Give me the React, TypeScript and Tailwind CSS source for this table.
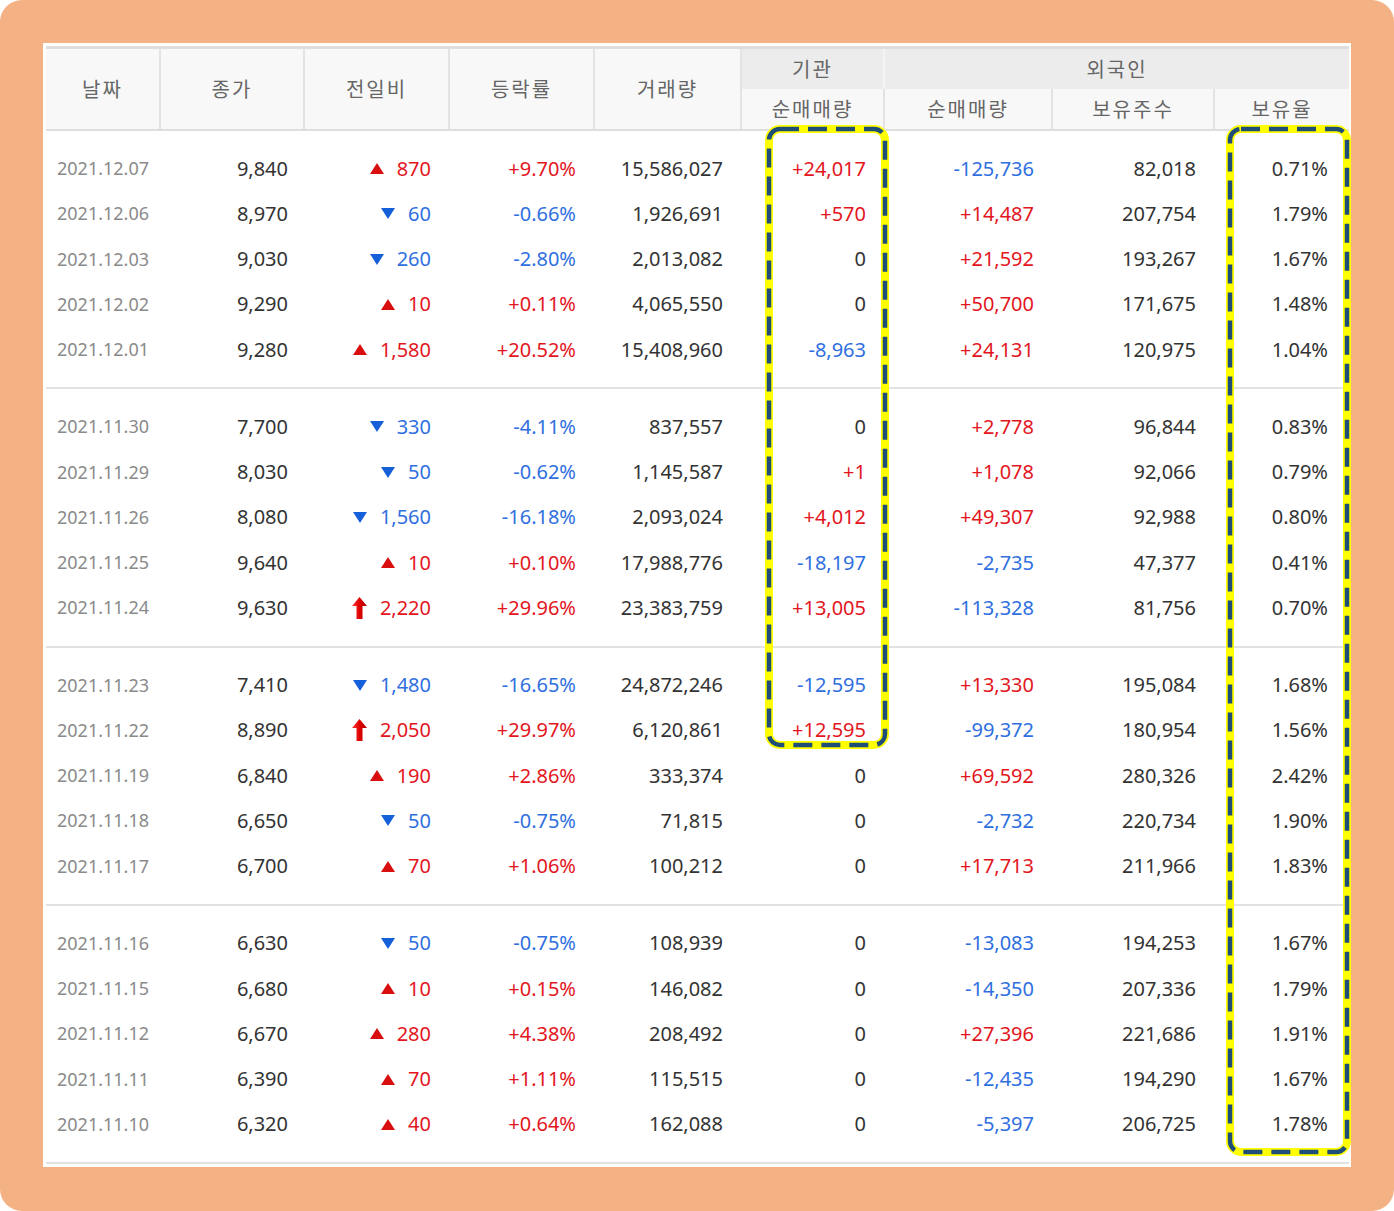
import React from 'react'

// ── data ──────────────────────────────────────────────────────────────────────

type Dir = 'up' | 'down' | 'limit'

interface Row {
  date: string
  close: string
  dir: Dir
  diff: string
  rate: string
  volume: string
  inst: string
  foreign: string
  shares: string
  ratio: string
}

const r = (
  date: string,
  close: string,
  dir: Dir,
  diff: string,
  rate: string,
  volume: string,
  inst: string,
  foreign: string,
  shares: string,
  ratio: string,
): Row => ({ date, close, dir, diff, rate, volume, inst, foreign, shares, ratio })

const groups: Row[][] = [
  [
    r('2021.12.07', '9,840', 'up', '870', '+9.70%', '15,586,027', '+24,017', '-125,736', '82,018', '0.71%'),
    r('2021.12.06', '8,970', 'down', '60', '-0.66%', '1,926,691', '+570', '+14,487', '207,754', '1.79%'),
    r('2021.12.03', '9,030', 'down', '260', '-2.80%', '2,013,082', '0', '+21,592', '193,267', '1.67%'),
    r('2021.12.02', '9,290', 'up', '10', '+0.11%', '4,065,550', '0', '+50,700', '171,675', '1.48%'),
    r('2021.12.01', '9,280', 'up', '1,580', '+20.52%', '15,408,960', '-8,963', '+24,131', '120,975', '1.04%'),
  ],
  [
    r('2021.11.30', '7,700', 'down', '330', '-4.11%', '837,557', '0', '+2,778', '96,844', '0.83%'),
    r('2021.11.29', '8,030', 'down', '50', '-0.62%', '1,145,587', '+1', '+1,078', '92,066', '0.79%'),
    r('2021.11.26', '8,080', 'down', '1,560', '-16.18%', '2,093,024', '+4,012', '+49,307', '92,988', '0.80%'),
    r('2021.11.25', '9,640', 'up', '10', '+0.10%', '17,988,776', '-18,197', '-2,735', '47,377', '0.41%'),
    r('2021.11.24', '9,630', 'limit', '2,220', '+29.96%', '23,383,759', '+13,005', '-113,328', '81,756', '0.70%'),
  ],
  [
    r('2021.11.23', '7,410', 'down', '1,480', '-16.65%', '24,872,246', '-12,595', '+13,330', '195,084', '1.68%'),
    r('2021.11.22', '8,890', 'limit', '2,050', '+29.97%', '6,120,861', '+12,595', '-99,372', '180,954', '1.56%'),
    r('2021.11.19', '6,840', 'up', '190', '+2.86%', '333,374', '0', '+69,592', '280,326', '2.42%'),
    r('2021.11.18', '6,650', 'down', '50', '-0.75%', '71,815', '0', '-2,732', '220,734', '1.90%'),
    r('2021.11.17', '6,700', 'up', '70', '+1.06%', '100,212', '0', '+17,713', '211,966', '1.83%'),
  ],
  [
    r('2021.11.16', '6,630', 'down', '50', '-0.75%', '108,939', '0', '-13,083', '194,253', '1.67%'),
    r('2021.11.15', '6,680', 'up', '10', '+0.15%', '146,082', '0', '-14,350', '207,336', '1.79%'),
    r('2021.11.12', '6,670', 'up', '280', '+4.38%', '208,492', '0', '+27,396', '221,686', '1.91%'),
    r('2021.11.11', '6,390', 'up', '70', '+1.11%', '115,515', '0', '-12,435', '194,290', '1.67%'),
    r('2021.11.10', '6,320', 'up', '40', '+0.64%', '162,088', '0', '-5,397', '206,725', '1.78%'),
  ],
]

const COLS = 'grid grid-cols-[115px_144px_145px_145px_147px_143px_168px_162px_134px]'
const FONT = { fontFamily: '"Noto Sans", "Noto Sans CJK KR", sans-serif' }
const HFONT = { fontFamily: '"Noto Sans CJK KR", "Noto Sans", sans-serif' }

// + red, - blue, 0 dark
const signColor = (v: string) => {
  if (v.startsWith('+')) return 'text-[#e3161e]'
  if (v.startsWith('-')) return 'text-[#2f6fe0]'
  return 'text-[#333333]'
}

// ── icons ─────────────────────────────────────────────────────────────────────

const UpTriangle = () => (
  <svg width="14" height="11" viewBox="0 0 14 11">
    <polygon points="7,0 14,11 0,11" fill="#d90f0f" />
  </svg>
)

const DownTriangle = () => (
  <svg width="14" height="11" viewBox="0 0 14 11">
    <polygon points="0,0 14,0 7,11" fill="#1560d8" />
  </svg>
)

const LimitArrow = () => (
  <svg width="15" height="22" viewBox="0 0 15 22">
    <defs>
      <linearGradient id="lim" x1="0" y1="0" x2="1" y2="0">
        <stop offset="0" stopColor="#ff3b3b" />
        <stop offset="0.5" stopColor="#e00000" />
        <stop offset="1" stopColor="#b00000" />
      </linearGradient>
    </defs>
    <polygon points="7.5,0 15,9 10.5,9 10.5,22 4.5,22 4.5,9 0,9" fill="url(#lim)" />
  </svg>
)

// ── highlight overlay ─────────────────────────────────────────────────────────

const Highlight = ({ className, w, h }: { className: string; w: number; h: number }) => (
  <svg className={`absolute pointer-events-none ${className}`} width={w} height={h} viewBox={`0 0 ${w} ${h}`}>
    <rect x="4" y="4" width={w - 8} height={h - 8} rx="11" fill="none" stroke="#ffff00" strokeWidth="8" />
    <rect
      x="4"
      y="4"
      width={w - 8}
      height={h - 8}
      rx="11"
      fill="none"
      stroke="#1f4e79"
      strokeWidth="4.5"
      strokeDasharray="19 9"
    />
  </svg>
)

// ── table ─────────────────────────────────────────────────────────────────────

const Header = () => {
  const cell = 'flex items-center justify-center bg-[#f8f8f8] text-[20px] text-[#666666] tracking-[2px]'
  return (
    <div className={`${COLS} grid-rows-[40px_40px] border-t-[3px] border-b-2 border-[#dedede]`} style={HFONT}>
      <div className={`${cell} row-span-2 border-r-2 border-[#e3e3e3]`}>날짜</div>
      <div className={`${cell} row-span-2 border-r-2 border-[#e3e3e3]`}>종가</div>
      <div className={`${cell} row-span-2 border-r-2 border-[#e3e3e3]`}>전일비</div>
      <div className={`${cell} row-span-2 border-r-2 border-[#e3e3e3]`}>등락률</div>
      <div className={`${cell} row-span-2 border-r-2 border-[#e3e3e3]`}>거래량</div>
      <div className="flex items-center justify-center bg-[#ececec] text-[20px] text-[#666666] tracking-[2px] border-r-2 border-[#f4f4f4]">
        기관
      </div>
      <div className="col-span-3 flex items-center justify-center bg-[#ececec] text-[20px] text-[#666666] tracking-[2px]">
        외국인
      </div>
      <div className={`${cell} border-r-2 border-[#e3e3e3]`}>순매매량</div>
      <div className={`${cell} border-r-2 border-[#e3e3e3]`}>순매매량</div>
      <div className={`${cell} border-r-2 border-[#e3e3e3]`}>보유주수</div>
      <div className={cell}>보유율</div>
    </div>
  )
}

const DataRow = ({ row }: { row: Row }) => {
  const num = 'flex items-center justify-end pr-[19px]'
  const up = row.dir !== 'down'
  return (
    <div className={`${COLS} h-[45.25px] text-[20px] text-[#333333]`} style={FONT}>
      <div className="flex items-center pl-[11px] text-[18px] text-[#8a8a8a]">{row.date}</div>
      <div className="flex items-center justify-end pr-[17px]">{row.close}</div>
      <div className={`${num} gap-[13px] ${up ? 'text-[#e3161e]' : 'text-[#2f6fe0]'}`}>
        {row.dir === 'up' && <UpTriangle />}
        {row.dir === 'down' && <DownTriangle />}
        {row.dir === 'limit' && <LimitArrow />}
        <span>{row.diff}</span>
      </div>
      <div className={`${num} ${signColor(row.rate)}`}>{row.rate}</div>
      <div className={num}>{row.volume}</div>
      <div className={`${num} ${signColor(row.inst)}`}>{row.inst}</div>
      <div className={`${num} pr-[18px] ${signColor(row.foreign)}`}>{row.foreign}</div>
      <div className={num}>{row.shares}</div>
      <div className={`${num} pr-[21px]`}>{row.ratio}</div>
    </div>
  )
}

export default function App() {
  return (
    <div className="w-[1394px] h-[1211px] bg-white">
      <div className="w-full h-full bg-[#f4b183] rounded-[22px] pt-[43px] pl-[43px]">
        <div className="relative w-[1308px] h-[1124px] bg-white pt-[3px] pl-[3px]">
          <div className="w-[1303px]">
            <Header />
            {groups.map((g, gi) => (
              <div key={gi} className="pt-[15px] pb-[15px] border-b-2 border-[#e2e2e2]">
                {g.map((row) => (
                  <DataRow key={row.date} row={row} />
                ))}
              </div>
            ))}
          </div>

          <Highlight className="left-[722px] top-[82px]" w={124} h={624} />
          <Highlight className="left-[1183px] top-[82px]" w={125} h={1031} />
        </div>
      </div>
    </div>
  )
}
